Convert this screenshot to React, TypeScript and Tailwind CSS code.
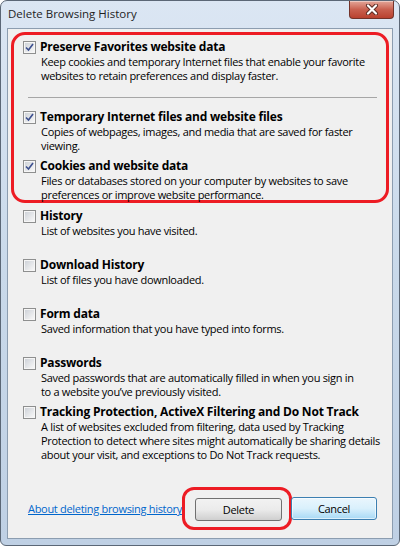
import React from 'react';

type Item = { label: string; lines: string[]; checked?: boolean };

const group: Item[] = [
  {
    label: 'Preserve Favorites website data',
    lines: ['Keep cookies and temporary Internet files that enable your favorite', 'websites to retain preferences and display faster.'],
    checked: true,
  },
  {
    label: 'Temporary Internet files and website files',
    lines: ['Copies of webpages, images, and media that are saved for faster', 'viewing.'],
    checked: true,
  },
  {
    label: 'Cookies and website data',
    lines: ['Files or databases stored on your computer by websites to save', 'preferences or improve website performance.'],
    checked: true,
  },
];

const rest: Item[] = [
  { label: 'History', lines: ['List of websites you have visited.'] },
  { label: 'Download History', lines: ['List of files you have downloaded.'] },
  { label: 'Form data', lines: ['Saved information that you have typed into forms.'] },
  {
    label: 'Passwords',
    lines: ['Saved passwords that are automatically filled in when you sign in', 'to a website you\u2019ve previously visited.'],
  },
  {
    label: 'Tracking Protection, ActiveX Filtering and Do Not Track',
    lines: [
      'A list of websites excluded from filtering, data used by Tracking',
      'Protection to detect where sites might automatically be sharing details',
      'about your visit, and exceptions to Do Not Track requests.',
    ],
  },
];

const CheckBox: React.FC<{ checked?: boolean }> = ({ checked }) => (
  <span className="mt-[2px] flex h-[13px] w-[13px] shrink-0 items-center justify-center border border-[#8e8f8f] bg-[#f4f4f4]">
    <span className="flex h-[11px] w-[11px] items-center justify-center border border-[#f6f6f6] bg-gradient-to-br from-[#cfd3d9] to-[#f7f7f7]">
      {checked && (
        <svg width="9" height="9" viewBox="0 0 9 9">
          <path d="M1 4.5 L3.5 7 L8 1" fill="none" stroke="#3c4f8e" strokeWidth={1.6} />
        </svg>
      )}
    </span>
  </span>
);

const Row: React.FC<{ item: Item }> = ({ item }) => (
  <div className="flex h-[49px] items-start gap-[4px]">
    <CheckBox checked={item.checked} />
    <div className="whitespace-nowrap">
      <div className="text-[12px] font-bold tracking-[-0.2px] text-black">{item.label}</div>
      <div className="mt-[1px] pl-[1px] leading-[14px]">
        {item.lines.map((l) => (
          <div key={l}>{l}</div>
        ))}
      </div>
    </div>
  </div>
);

export default function App() {
  return (
    <div className="h-[547px] w-[400px] bg-white font-['Open_Sans',sans-serif] text-[11px] leading-[15px] tracking-[-0.3px] text-black">
      <div className="flex h-[546px] w-[400px] flex-col rounded-t-[7px] rounded-b-[6px] border border-[#5b6776] bg-gradient-to-b from-[#dbe6f3] via-[#c9d9ea] to-[#bfd0e4]">
        {/* 标题栏 */}
        <div className="flex h-[27px] shrink-0 items-start justify-between">
          <span className="mt-[5px] ml-[7px] text-[11.5px] tracking-normal text-[#1e1e1e]">Delete Browsing History</span>
          <div className="mr-[5px] flex h-[18px] w-[45px] items-center justify-center rounded-b-[4px] border border-t-0 border-[#73332a] bg-gradient-to-b from-[#e3a699] via-[#c9604f] to-[#b9412f] shadow-[inset_0_1px_0_rgba(255,255,255,0.4)]">
            <svg width="14" height="11" viewBox="0 0 14 11">
              <path d="M3 1.5 L11 9.5 M11 1.5 L3 9.5" stroke="#5a2a22" strokeWidth={4} strokeLinecap="round" />
              <path d="M3 1.5 L11 9.5 M11 1.5 L3 9.5" stroke="#ffffff" strokeWidth={2.2} strokeLinecap="round" />
            </svg>
          </div>
        </div>

        {/* 内容面板 */}
        <div className="mx-[6px] mb-[6px] flex flex-1 flex-col border border-[#8c9db0] bg-[#f0f0f0]">
          <div className="mt-[3px] ml-[3px] h-[171px] w-[378px] rounded-[14px] border-[3px] border-[#ed1c24] pt-[4px] pl-[9px]">
            <Row item={group[0]} />
            <div className="h-[21px] pt-[9px] pl-[5px]">
              <div className="h-px w-[349px] bg-[#a6a6a6]" />
            </div>
            <Row item={group[1]} />
            <Row item={group[2]} />
          </div>

          <div className="mt-[5px] pl-[15px]">
            {rest.map((item) => (
              <Row key={item.label} item={item} />
            ))}
          </div>

          {/* 底部按钮 */}
          <div className="mt-auto mb-[8px] flex items-center pr-[15px] pl-[20px]">
            <a href="#" className="text-[#0066cc] underline">
              About deleting browsing history
            </a>
            <div className="ml-auto flex items-center">
              <div className="rounded-[12px] border-[3px] border-[#ed1c24] pt-[8px] pr-[7px] pb-[6px] pl-[10px]">
                <button className="h-[23px] w-[87px] rounded-[3px] border border-[#707070] bg-gradient-to-b from-[#f2f2f2] via-[#ebebeb] to-[#cfcfcf] text-black">
                  Delete
                </button>
              </div>
              <button className="-ml-px h-[23px] w-[86px] rounded-[3px] border border-[#3c7fb1] bg-gradient-to-b from-[#eaf6fd] via-[#d9f0fc] to-[#a7d9f5] text-black shadow-[inset_0_0_0_1px_rgba(255,255,255,0.6)]">
                Cancel
              </button>
            </div>
          </div>
        </div>
      </div>
    </div>
  );
}
